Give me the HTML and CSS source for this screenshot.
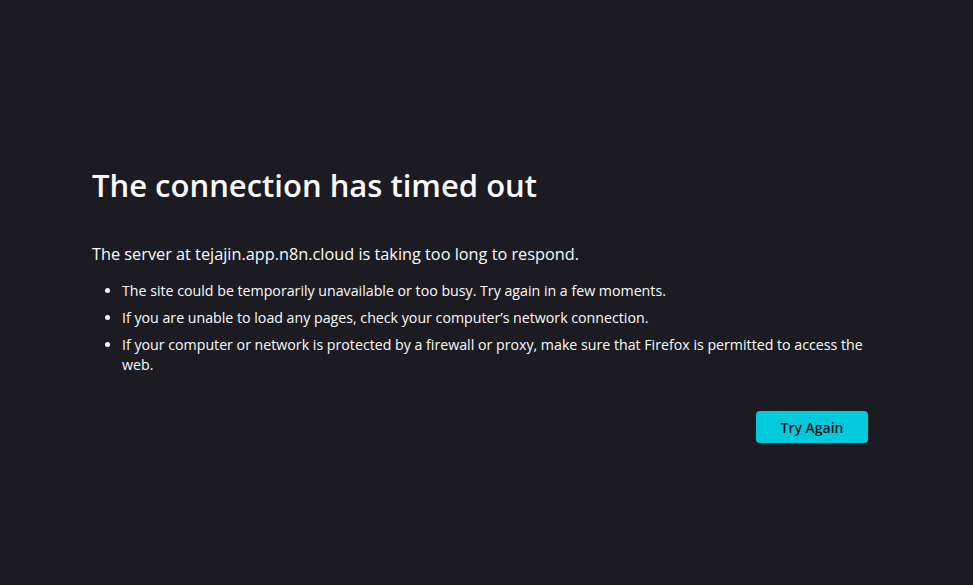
FILE: index.html
```html
<!DOCTYPE html>
<html lang="en">
<head>
	<meta charset="UTF-8">
	<title>Problem loading page</title>
	<link rel="stylesheet" href="styles.css">
</head>
<body>
	<div class="container">
		<h1 class="title">The connection has timed out</h1>
		<p class="short-desc">The server at tejajin.app.n8n.cloud is taking too long to respond.</p>
		<ul class="long-desc">
			<li>The site could be temporarily unavailable or too busy. Try again in a few moments.</li>
			<li>If you are unable to load any pages, check your computer’s network connection.</li>
			<li>If your computer or network is protected by a firewall or proxy, make sure that Firefox is permitted to access the web.</li>
		</ul>
		<div class="button-row">
			<button class="try-again">Try Again</button>
		</div>
	</div>
</body>
</html>
```

FILE: styles.css
```css
*{
	margin: 0;
	padding: 0;
	box-sizing: border-box;
}
body{
	background: #1c1b22;
	color: #fbfbfe;
	font-family: "Open Sans", "Noto Sans", sans-serif;
	font-size: 15px;
	padding-top: 163px;
}
.container{
	width: 776px;
	margin-left: 92px;
}
.title{
	font-size: 31px;
	font-weight: 600;
	line-height: 44px;
	margin-bottom: 36px;
}
.short-desc{
	font-size: 16.3px;
	line-height: 22px;
	margin-bottom: 16px;
}
.long-desc{
	padding-left: 30px;
	font-size: 14.2px;
	line-height: 20px;
}
.long-desc li{
	margin-bottom: 7px;
}
.button-row{
	display: flex;
	justify-content: flex-end;
	margin-top: 36px;
}
.try-again{
	width: 112px;
	height: 32px;
	border: none;
	border-radius: 4px;
	background: #00cadb;
	color: #15141a;
	font-family: inherit;
	font-size: 14px;
	font-weight: 600;
}
```
